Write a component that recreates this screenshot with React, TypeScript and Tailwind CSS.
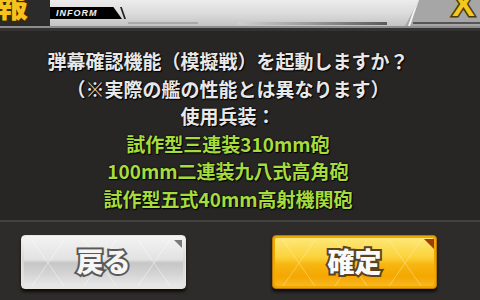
export default function App() {
  const weapons = [
    "試作型三連装310mm砲",
    "100mm二連装九八式高角砲",
    "試作型五式40mm高射機関砲",
  ];

  return (
    <div className="w-[480px] h-[300px] overflow-hidden flex flex-col bg-[#292725] font-['Noto_Sans_CJK_JP','Noto_Sans',sans-serif]">
      {/* header bar */}
      <header className="h-[28px] shrink-0 flex bg-gradient-to-b from-[#ececec] via-[#dcdcdc] to-[#c4c4c4] border-b-2 border-[#8d8d8d] overflow-hidden">
        <div className="w-[50px] shrink-0 bg-[#2b2b2b] overflow-hidden">
          <span className="block -mt-[17px] -ml-[4px] text-[32px] leading-[40px] font-black text-[#f6c21c] [-webkit-text-stroke:3px_#3a2a00] [paint-order:stroke_fill]">
            報
          </span>
        </div>
        <div className="flex flex-col pt-[7px]">
          <div className="flex items-center">
            <div className="h-[12px] w-[72px] bg-black [clip-path:polygon(0_0,88%_0,100%_100%,0_100%)] flex items-center pl-[6px]">
              <span className="text-[9px] leading-none font-bold italic tracking-[1px] text-[#f2f2f2] font-['Liberation_Sans',sans-serif]">
                INFORM
              </span>
            </div>
            <div className="h-[12px] w-[6px] -ml-[2px] bg-[#222] [clip-path:polygon(0_0,30%_0,100%_100%,70%_100%)]" />
          </div>
          <div className="flex mt-[3px] ml-[78px] gap-[2px]">
            <div className="h-[2px] w-[70px] bg-[#a9a9a9]" />
          </div>
        </div>
        <div className="flex-1 flex flex-col justify-end pb-[1px]">
          <div className="h-[3px] mr-[20px] ml-[40px] bg-gradient-to-r from-[#cfcfcf] via-[#9a9a9a] to-[#5a5a5a]" />
        </div>
        <div className="w-[75px] shrink-0 -ml-[2px] bg-[#a6a6a6] [clip-path:polygon(14px_0,100%_0,100%_100%,0_100%)] relative overflow-hidden">
          <div className="absolute inset-y-0 left-[3px] w-[14px] bg-[#f4f4f4] [clip-path:polygon(9px_0,11px_0,2px_100%,0_100%)]" />
          <div className="absolute bottom-[2px] left-[8px] right-0 h-[2px] bg-[#555]" />
          <span className="absolute -top-[16px] left-[47px] text-[34px] leading-[40px] font-black text-[#f4c81e] [-webkit-text-stroke:3px_#4a3a00] [paint-order:stroke_fill] font-['Liberation_Sans',sans-serif]">
            X
          </span>
        </div>
      </header>

      {/* message */}
      <main className="flex-1 flex flex-col items-center pt-[16px] pr-[24px] bg-[#282624] border-t-[3px] border-[#353331] font-bold text-[19px] leading-[27.5px] [text-shadow:0_0_2px_#000,1px_1px_1px_#000]">
        <p className="text-[#e8e8e8]">弾幕確認機能（模擬戦）を起動しますか？</p>
        <p className="text-[#e8e8e8]">（※実際の艦の性能とは異なります）</p>
        <p className="text-[#e8e8e8]">使用兵装：</p>
        {weapons.map((w) => (
          <p key={w} className="text-[#a6dc3c]">
            {w}
          </p>
        ))}
      </main>

      {/* buttons */}
      <footer className="h-[80px] shrink-0 flex items-start pt-[13px] pl-[21px] gap-[86px] bg-[#2e2c2a] border-t-2 border-[#44423f]">
        <button className="relative w-[165px] h-[54px] rounded-[4px] border border-[#ebe6dc] bg-gradient-to-b from-[#f4f4f4] via-[#d6d6d6] to-[#e6e6e6] shadow-[0_3px_3px_rgba(0,0,0,0.7)] overflow-hidden">
          <div className="absolute inset-[2px] rounded-[2px] bg-[linear-gradient(to_bottom,#f2f2f2_0%,#e2e2e2_45%,#c6c6c6_52%,#d4d4d4_75%,#e8e8e8_100%)]" />
          <svg className="absolute inset-0" width="165" height="54" viewBox="0 0 165 54">
            <path d="M10 4 L42 50 M42 4 L10 50 M62 4 L94 50 M94 4 L62 50 M116 4 L148 50 M148 4 L116 50" stroke="#ffffff" strokeOpacity="0.45" strokeWidth="1" fill="none" />
            <path d="M152 4 L160 4 L160 12 Z" fill="#7a7a7a" />
          </svg>
          <span className="relative text-[27px] leading-none font-black text-[#f5f5f5] [-webkit-text-stroke:4px_#595959] [paint-order:stroke_fill]">
            戻る
          </span>
        </button>
        <button className="relative w-[165px] h-[54px] rounded-[4px] border border-[#b87a08] bg-[#f0a800] shadow-[0_3px_3px_rgba(0,0,0,0.7)] overflow-hidden">
          <div className="absolute inset-[2px] rounded-[2px] bg-[linear-gradient(to_bottom,#fde878_0%,#fbd23a_40%,#f7b612_55%,#f4a700_80%,#f8b820_100%)]" />
          <svg className="absolute inset-0" width="165" height="54" viewBox="0 0 165 54">
            <path d="M10 4 L42 50 M42 4 L10 50 M62 4 L94 50 M94 4 L62 50 M116 4 L148 50 M148 4 L116 50" stroke="#fff8c0" strokeOpacity="0.4" strokeWidth="1" fill="none" />
            <path d="M151 3 L161 3 L161 13 Z" fill="#9c3e06" />
          </svg>
          <span className="relative text-[27px] leading-none font-black text-[#fafafa] [-webkit-text-stroke:4px_#5a4320] [paint-order:stroke_fill]">
            確定
          </span>
        </button>
      </footer>
    </div>
  );
}
